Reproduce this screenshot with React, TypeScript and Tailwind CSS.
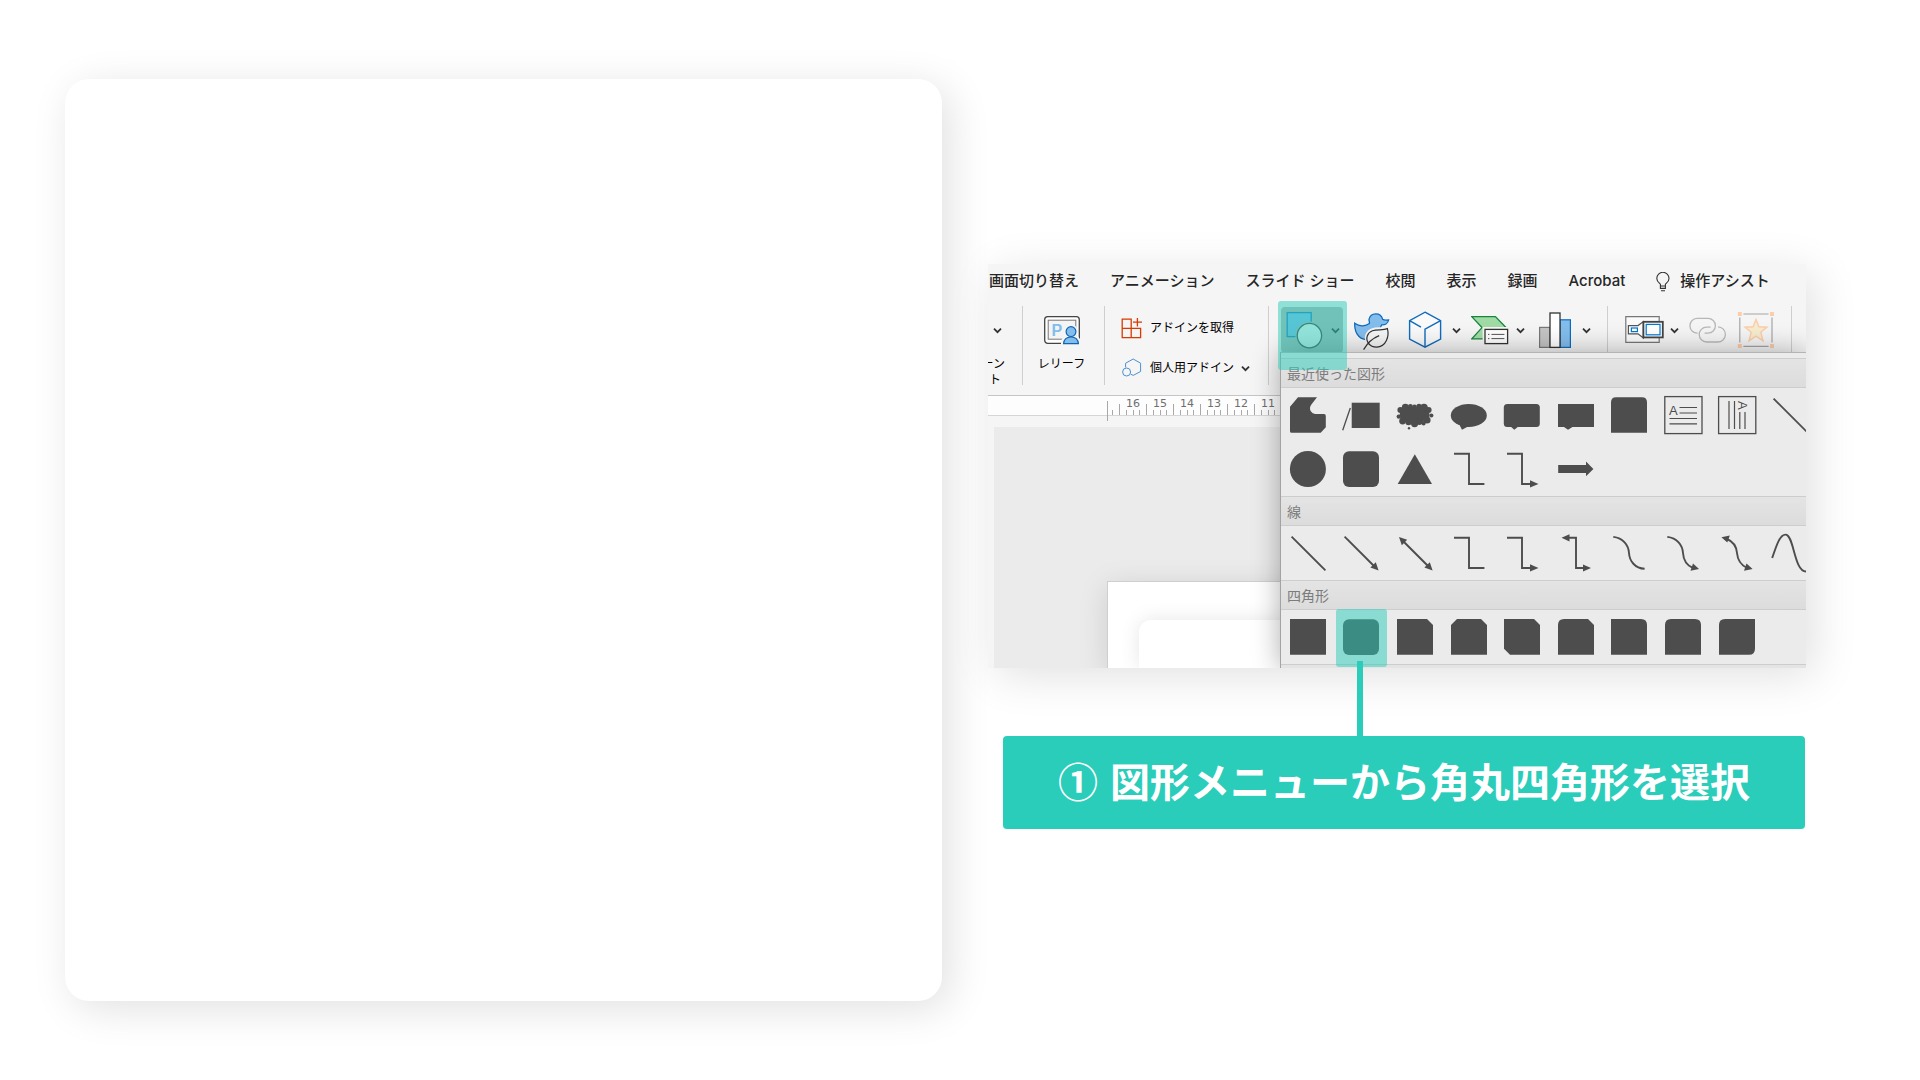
import type { ReactNode } from "react";
import clsx from "clsx";

const menuItems = [
  "画面切り替え",
  "アニメーション",
  "スライド ショー",
  "校閲",
  "表示",
  "録画",
  "Acrobat",
];

const rulerMarks = [16, 15, 14, 13, 12, 11, 10, 9];

type Shape = { name: string; art: ReactNode };

const line = { fill: "none", stroke: "#4d4d4d", strokeWidth: 1.9 };

// [cx, cy, r] of the puffs round the cloud's body
const cloudPuffs = [
  [5.4, 15, 3],
  [10.4, 12.4, 3.6],
  [15.4, 11.4, 2.4],
  [19.5, 12, 2.4],
  [24, 11.4, 2.6],
  [29, 12.6, 3.8],
  [33.6, 15, 3],
  [36.4, 20.4, 2],
  [32, 25, 3.6],
  [28.6, 28.4, 2],
  [24.4, 27, 3],
  [19.6, 28.6, 3.6],
  [13.6, 27, 3.2],
  [7.6, 26, 3.4],
  [3.8, 21.6, 2.2],
];

const diagonal = <path d="M3.6 3.6 37.4 37.4" {...line} />;
const elbow = <path d="M5 4.8H20V35H35.4" {...line} />;
const elbowArrow = (
  <>
    <path d="M5 4.8H20V35H30" {...line} />
    <path d="M28 31.2 36.5 35 28 38.6Z" />
  </>
);
const roundRect = <rect x="2" y="2.3" width="36" height="35.6" rx="6" />;
const roundTop = <path d="M2 37.8V7.5Q2 2.2 7 2.2H33Q38 2.2 38 7.5V37.8Z" />;

const recentShapes: Shape[] = [
  {
    name: "フリーフォーム",
    art: (
      <path d="M10 2.3H29L23.4 9.4Q20.8 13 23 16.6Q24.4 19 27.4 19H36Q37.8 19 37.8 21V32.3L32.7 37.8H3.5Q2 37.8 2 36.3V11.7Z" />
    ),
  },
  {
    name: "線吹き出し",
    art: (
      <>
        <path d="M9.3 13 1.7 35.3" {...line} strokeWidth={1.3} />
        <path d="M10.7 7.7H38.7V33H10.7Z" />
      </>
    ),
  },
  {
    name: "雲形吹き出し",
    art: (
      <>
        <ellipse cx="19.6" cy="20" rx="15" ry="8.6" />
        {cloudPuffs.map(([cx, cy, r]) => (
          <circle key={`${cx}-${cy}`} cx={cx} cy={cy} r={r} />
        ))}
        <circle cx="14" cy="33.2" r="1.2" />
      </>
    ),
  },
  {
    name: "円形吹き出し",
    art: (
      <>
        <ellipse cx="19.8" cy="20.4" rx="18" ry="11.5" />
        <path d="M11 28V31L13 34.8 20 31V28Z" />
      </>
    ),
  },
  {
    name: "角丸吹き出し",
    art: (
      <>
        <rect x="1.8" y="9" width="36" height="23" rx="3.5" />
        <path d="M8 31 12.3 34.8 17 31Z" />
      </>
    ),
  },
  { name: "四角形吹き出し", art: <path d="M2 9H38V32H16.5L12 34.8 8 32H2Z" /> },
  { name: "角丸 (上)", art: roundTop },
  {
    name: "テキスト ボックス",
    art: (
      <>
        <rect x="1.8" y="1.6" width="37.2" height="37" {...line} strokeWidth={1.3} />
        <path d="M16.5 12.5H34M16.5 18H34M6.5 23.5H34M6.5 28.8H34" {...line} strokeWidth={1.2} />
        <text x="6" y="19.5" fontSize="13" fontFamily="Liberation Sans, sans-serif">
          A
        </text>
      </>
    ),
  },
  {
    name: "縦書きテキスト ボックス",
    art: (
      <>
        <rect x="1.6" y="1.6" width="37.2" height="37" {...line} strokeWidth={1.3} />
        <path d="M12 6V34M17.5 6V34M22.8 17V34M28 17V34" {...line} strokeWidth={1.2} />
        <text
          x="0"
          y="0"
          fontSize="13"
          fontFamily="Liberation Sans, sans-serif"
          transform="translate(21 6) rotate(90)"
        >
          A
        </text>
      </>
    ),
  },
  { name: "直線", art: diagonal },
  { name: "楕円", art: <circle cx="19.9" cy="20" r="18" /> },
  { name: "角丸四角形", art: roundRect },
  { name: "三角形", art: <path d="M19.8 5.2 37 35H2.7Z" /> },
  { name: "カギ線コネクタ", art: elbow },
  { name: "カギ線矢印コネクタ", art: elbowArrow },
  { name: "右矢印", art: <path d="M2.2 16H30V12.6L37.4 20 30 27.2V24H2.2Z" /> },
];

const lineShapes: Shape[] = [
  { name: "直線", art: diagonal },
  {
    name: "直線矢印",
    art: (
      <>
        <path d="M3.6 3.6 33 33" {...line} />
        <path d="M37.6 37.4 29.4 34.6 34.8 29.2Z" />
      </>
    ),
  },
  {
    name: "両方向矢印",
    art: (
      <>
        <path d="M8 8 33 33" {...line} />
        <path d="M37.6 37.4 29.4 34.6 34.8 29.2ZM4 4 12.2 6.8 6.8 12.2Z" />
      </>
    ),
  },
  { name: "カギ線コネクタ", art: elbow },
  { name: "カギ線矢印コネクタ", art: elbowArrow },
  {
    name: "カギ線両方向矢印",
    art: (
      <>
        <path d="M12 4.8H20V35H28" {...line} />
        <path d="M13.5 1.2 5.5 4.8 13.5 8.4ZM27 31.4 35 35 27 38.6Z" />
      </>
    ),
  },
  { name: "曲線コネクタ", art: <path d="M4.3 3.9C14 5 19.5 12 20 20S26 35.4 35.6 35.8" {...line} /> },
  {
    name: "曲線矢印コネクタ",
    art: (
      <>
        <path d="M4.3 3.9C14 5 19.5 12 20 20S24 32.5 30 35" {...line} />
        <path d="M30 30.6 36 36 27.5 37.8Z" />
      </>
    ),
  },
  {
    name: "曲線両方向矢印",
    art: (
      <>
        <path d="M10 6C16 8.5 19.5 14 20 20S24 32 30 35" {...line} />
        <path d="M29.5 30.6 35.6 36 27 37.8ZM4.4 4.2 12.8 2.6 10.3 9.6Z" />
      </>
    ),
  },
  { name: "曲線", art: <path d="M2.2 25C6 14 9.5 1.6 15.5 1.6C24 1.6 24 38.5 36 38.5" {...line} /> },
];

const rectShapes: Shape[] = [
  { name: "正方形", art: <path d="M2 2H38V37.8H2Z" /> },
  { name: "角丸四角形", art: roundRect },
  { name: "1 つの角を切り取った四角形", art: <path d="M2 2H32L38 8V37.8H2Z" /> },
  { name: "上の角を切り取った四角形", art: <path d="M8 2H32L38 8V37.8H2V8Z" /> },
  { name: "対角を切り取った四角形", art: <path d="M2 2H32L38 8V37.8H8L2 31.8Z" /> },
  { name: "角を切り取り丸めた四角形", art: <path d="M2 8Q2 2 8 2H32L38 8V37.8H2Z" /> },
  { name: "1 つの角を丸めた四角形", art: <path d="M2 2H32Q38 2 38 8V37.8H2Z" /> },
  { name: "上の角を丸めた四角形", art: <path d="M2 8Q2 2 8 2H32Q38 2 38 8V37.8H2Z" /> },
  { name: "対角を丸めた四角形", art: <path d="M2 8Q2 2 8 2H38V31.8Q38 37.8 32 37.8H2Z" /> },
];

function Chevron() {
  return (
    <svg className="h-[9px] w-[9px] shrink-0" viewBox="0 0 9 9" fill="none" aria-hidden>
      <path d="M1 2.6 4.5 6.2 8 2.6" stroke="#333" strokeWidth="1.8" />
    </svg>
  );
}

function Divider() {
  return <div className="mt-[6px] h-[79px] w-px shrink-0 bg-[#cfcfcf]" />;
}

function Icon({ wide, children }: { wide?: boolean; children: ReactNode }) {
  return (
    <svg
      className={clsx("h-10 shrink-0", wide ? "w-10" : "w-[38px]")}
      viewBox={wide ? "0 0 40 40" : "0 0 38 40"}
      fill="none"
      aria-hidden
    >
      {children}
    </svg>
  );
}

function ShapeSection({
  title,
  shapes,
  picked,
}: {
  title: string;
  shapes: Shape[];
  picked?: number;
}) {
  return (
    <section>
      <h2 className="flex h-[30px] items-center border-y border-[#cdcdcd] bg-linear-to-b from-[#e4e4e4] to-[#dcdcdc] px-[6px] pt-px text-sm text-[#7c7c7c]">
        {title}
      </h2>
      <div className="grid w-[536px] grid-cols-10">
        {shapes.map((s, i) => (
          <button
            key={i}
            type="button"
            aria-label={s.name}
            className="relative flex h-[54px] items-center justify-center"
          >
            <svg className="h-10 w-10" viewBox="0 0 40 40" fill="#4d4d4d" aria-hidden>
              {s.art}
            </svg>
            {picked === i && (
              <span className="absolute -top-px left-px h-[58px] w-[51px] rounded-[3px] bg-[#2accba]/50" />
            )}
          </button>
        ))}
      </div>
    </section>
  );
}

function MenuBar() {
  return (
    <nav className="flex h-[35px] items-center gap-[31px] pl-px text-[15px] font-medium whitespace-nowrap text-[#262626]">
      {menuItems.map((m) => (
        <a key={m} href="#">
          {m}
        </a>
      ))}
      <a href="#" className="flex items-center gap-[10px]">
        <svg className="h-5 w-[14px]" viewBox="0 0 14 20" fill="none" stroke="#333" aria-hidden>
          <path
            d="M4.4 14V12.2C3 10.6.8 9.4.8 6.4A6.1 6.1 0 0 1 13 6.4C13 9.4 10.8 10.6 9.4 12.2V14ZM4.4 14V16.4H9.4V14M5 18.8H9"
            strokeWidth="1.1"
          />
        </svg>
        操作アシスト
      </a>
    </nav>
  );
}

function Ribbon() {
  return (
    <div className="mt-px flex h-24 border-b border-[#c6c6c6] text-xs whitespace-nowrap text-black">
      <div className="flex w-[34px] shrink-0 flex-col items-start">
        <button type="button" aria-label="その他" className="flex h-14 items-center pt-1 pl-[5px]">
          <Chevron />
        </button>
        <div className="flex w-[17px] flex-col items-end leading-4">
          <span>ーン</span>
          <span className="pr-1">ト</span>
        </div>
      </div>
      <Divider />

      <button type="button" className="flex w-[81px] shrink-0 flex-col items-center pt-[10px] pr-1">
        <Icon>
          <rect x="1.7" y="6.7" width="34.6" height="26.6" rx="3" fill="#fff" stroke="#444" strokeWidth="1.3" />
          <rect x="5.2" y="10.2" width="27.6" height="19" fill="#f4f4f4" stroke="#777" />
          <text x="8.6" y="26" fontSize="16" fontWeight="700" fill="#83bdec" fontFamily="Liberation Sans, sans-serif">
            P
          </text>
          <path d="M18 35V32Q19 25 28 25T38 32V35Z" fill="#f5f5f5" />
          <circle cx="28" cy="21.5" r="7" fill="#f5f5f5" />
          <circle cx="28" cy="21.6" r="4.9" fill="#83bdec" stroke="#0f64b4" strokeWidth="1.2" />
          <path d="M20.6 33.6Q21.2 27 28 27T35.4 33.6Z" fill="#83bdec" stroke="#0f64b4" strokeWidth="1.2" />
        </Icon>
        <span className="mt-[6px] leading-4">レリーフ</span>
      </button>
      <Divider />

      <div className="flex w-[163px] shrink-0 flex-col pt-2 pl-4">
        <button type="button" className="flex h-10 items-center gap-[7px]">
          <svg className="h-[22px] w-[22px]" viewBox="0 0 22 22" fill="none" stroke="#d83b01" strokeWidth="1.3" aria-hidden>
            <path d="M1.2 2.2H10.2V20.6H1.2ZM1.2 11.4H19.6V20.6H1.2M16.4 1V9.6M12 5.2H21" />
          </svg>
          アドインを取得
        </button>
        <button type="button" className="flex h-10 items-center gap-[7px]">
          <svg className="h-[22px] w-[22px]" viewBox="0 0 22 22" fill="none" stroke="#4a90d0" aria-hidden>
            <path d="M4.6 10.5V6.2L12.2 2 19.6 6.2V14.5L12.2 18.4 9.8 17.2" />
            <circle cx="5.6" cy="15" r="4" />
          </svg>
          個人用アドイン
          <Chevron />
        </button>
      </div>
      <Divider />

      <div className="flex h-[60px] shrink-0 items-center gap-[10px] pl-3">
        <button
          type="button"
          aria-label="図形"
          className="flex h-[46px] w-[62px] items-center gap-[6px] rounded-[4px] bg-[#b8b8b8] pl-1"
        >
          <Icon wide>
            <rect x="2.2" y="2.6" width="24" height="24" fill="#83beef" stroke="#1e78c8" strokeWidth="1.3" />
            <circle cx="24.4" cy="25.6" r="14" fill="#b8b8b8" />
            <circle cx="24.4" cy="25.6" r="12.2" fill="#fafafa" stroke="#444" strokeWidth="1.3" />
          </Icon>
          <Chevron />
        </button>
        <button type="button" aria-label="アイコン" className="w-11">
          <Icon>
            <path
              d="M1.7 13.2C6 16.2 12 17 16.4 13.6C16.8 12.8 16 11 16 9.4A7 7 0 0 1 29.6 9.2C30.6 10.2 33.4 10.2 35.6 10C35 13.6 31.6 15 28.6 14.8C27.4 16.4 27.6 18 27.6 20C27.4 26 20 30 13.6 29.6C4.6 29 1.4 21 1.7 13.2Z"
              fill="#83bdec"
              stroke="#0f6cbd"
              strokeWidth="1.3"
            />
            <path
              d="M10.6 39.6C12.6 36 14 33.4 15.6 31.6C13 28 14.6 22.6 19.4 20.8C24.4 19 30 20.6 34.4 18.6C36.4 26 33.4 36.6 23.6 37.2C20 37.2 17 36.4 14.8 34.6"
              fill="#f6f6f6"
              stroke="#f6f6f6"
              strokeWidth="5"
            />
            <path
              d="M10.6 39.6C14.6 32.6 19 28.4 26.2 25.6M15.6 33.4C12 28.6 14.4 22.6 19.4 20.8C24.4 19 30 20.6 34.4 18.6C36.4 26 33.4 36.6 23.6 37.2C20.4 37.2 17.6 36.4 15.6 33.4Z"
              stroke="#333"
              strokeWidth="1.2"
            />
          </Icon>
        </button>
        <button type="button" aria-label="3D モデル" className="flex items-center gap-[7px]">
          <Icon>
            <path
              d="M18 2.2 33.6 10.6V29L18 37.2 2.6 29V10.6Z"
              fill="#fafafa"
              stroke="#0f6cbd"
              strokeWidth="1.4"
            />
            <path d="M2.6 10.6 14 17.2M18 37.2V19.2L33.6 10.6" stroke="#0f6cbd" strokeWidth="1.4" />
          </Icon>
          <Chevron />
        </button>
        <button type="button" aria-label="SmartArt" className="flex items-center gap-[7px]">
          <Icon>
            <path d="M.8 6.6H24.4L35 17.6 24 28.8H.8L11 17.6Z" fill="#a0dba6" stroke="#17853f" strokeWidth="1.3" />
            <rect x="11.6" y="17" width="28" height="20" fill="#f6f6f6" />
            <rect x="14" y="19.4" width="22.6" height="14.2" fill="#fff" stroke="#333" strokeWidth="1.3" />
            <path d="M20.4 24.4H33.4M20.4 28.6H33.4M17 24.4H18.4M17 28.6H18.4" stroke="#555" />
          </Icon>
          <Chevron />
        </button>
        <button type="button" aria-label="グラフ" className="flex items-center gap-[7px]">
          <Icon wide>
            <rect x="4.6" y="17.4" width="10.4" height="20" fill="#c4c4c4" stroke="#777" strokeWidth="1.2" />
            <rect x="25" y="9.8" width="10.4" height="27.6" fill="#83bdec" stroke="#0f6cbd" strokeWidth="1.2" />
            <rect x="15" y="3" width="10" height="34.4" fill="#fff" stroke="#333" strokeWidth="1.3" />
          </Icon>
          <Chevron />
        </button>
      </div>
      <div className="ml-4 flex">
        <Divider />
      </div>

      <div className="flex h-[60px] shrink-0 items-center gap-[10px] px-4">
        <button type="button" aria-label="テキスト" className="flex items-center gap-[6px]">
          <Icon wide>
            <path d="M1.8 6.6H35.2V32.4H1.8Z" fill="#fafafa" stroke="#777" strokeWidth="1.2" />
            <path d="M4.4 15.6H14L19.4 11.6V28L14 23.8H4.4Z" fill="#fff" stroke="#555" strokeWidth="1.2" />
            <rect x="7.4" y="18" width="6" height="3.6" stroke="#0078d4" strokeWidth="1.2" />
            <rect x="19.4" y="11.8" width="19.4" height="15.6" fill="#fff" stroke="#444" strokeWidth="1.8" />
            <rect x="22.2" y="14.4" width="13.8" height="10.4" stroke="#0078d4" strokeWidth="1.2" />
          </Icon>
          <Chevron />
        </button>
        <button type="button" aria-label="リンク" disabled>
          <Icon>
            <path
              d="M8.6 23.2A7.4 7.4 0 0 1 8 8.4H19A7.4 7.4 0 0 1 19 23.2H15.6M29 16.8A7.4 7.4 0 0 1 28.6 32H17.6A7.4 7.4 0 0 1 17.6 17.2H21.6"
              stroke="#b8b8b8"
              strokeWidth="1.3"
            />
          </Icon>
        </button>
        <button type="button" aria-label="オブジェクト" disabled>
          <Icon>
            <path d="M6.4 4H31.6M6.4 36.4H31.6M2.8 7.6V32.6M35 7.6V32.6" stroke="#a6a6a6" strokeWidth="1.2" />
            <path
              d="M19 9.4 21.9 16.8 30 17.2 23.8 22.2 26 30.8 19 26.2 12 30.8 14.2 22.2 8 17.2 16.1 16.8Z"
              fill="#f7ecce"
              stroke="#fbcdaa"
              strokeWidth="1.4"
            />
            <path d="M.8 2H4.8V6H.8ZM33 2H37V6H33ZM.8 34H4.8V38H.8ZM33 34H37V38H33Z" fill="#fbcdaa" />
          </Icon>
        </button>
      </div>
      <Divider />
    </div>
  );
}

function Ruler() {
  return (
    <div className="flex h-5 border-b border-[#d6d6d6] bg-[#fdfdfd] pl-[119px]">
      <svg className="h-[25px] w-3 shrink-0" viewBox="0 0 12 25" stroke="#a8a8a8" aria-hidden>
        <path d="M.5 5V25M5.5 14V19" />
      </svg>
      {rulerMarks.map((n) => (
        <svg key={n} className="h-5 w-[27px] shrink-0" viewBox="0 0 27 20" aria-hidden>
          <path d="M.5 8V19M7.5 14V19M14.5 14V19M20.5 14V19" stroke="#a8a8a8" />
          <text x="14" y="11" textAnchor="middle" fontSize="11" fill="#6f6f6f" fontFamily="DejaVu Sans, sans-serif">
            {n}
          </text>
        </svg>
      ))}
    </div>
  );
}

function Workspace() {
  return (
    <div className="mt-[11px] ml-[6px] overflow-hidden bg-[#ebebeb] pt-[154px] pl-[113px]">
      <div className="overflow-hidden border-t border-l border-[#cfcfcf] bg-white pt-[38px] pl-[31px] shadow-[0_6px_28px_rgba(0,0,0,0.13)]">
        <div className="h-12 rounded-tl-xl bg-white shadow-[0_0_20px_rgba(0,0,0,0.1)]" />
      </div>
    </div>
  );
}

function ShapePopup() {
  return (
    <div className="absolute top-[88px] right-0 bottom-0 left-[292px] border-l border-[#a3a3a3] shadow-[0_0_26px_rgba(0,0,0,0.32)]">
      <div className="h-full overflow-hidden border-t border-[#b4b4b4] bg-[#ebebeb] pt-[5px]">
        <ShapeSection title="最近使った図形" shapes={recentShapes} />
        <ShapeSection title="線" shapes={lineShapes} />
        <ShapeSection title="四角形" shapes={rectShapes} picked={1} />
        <div className="h-[30px] border-t border-[#cdcdcd] bg-[#e4e4e4]" />
      </div>
    </div>
  );
}

export default function App() {
  return (
    <main className="grid min-h-screen grid-cols-[877fr_818fr] gap-[46px] overflow-hidden bg-white py-[79px] pr-[114px] pl-[65px] font-['Inter','Noto_Sans_CJK_JP',sans-serif]">
      <div className="rounded-3xl bg-white shadow-[8px_8px_42px_rgba(0,0,0,0.12)]" />

      <div className="min-w-0 pt-[185px]">
        <div className="shadow-[8px_8px_42px_rgba(0,0,0,0.12)]">
          <div className="relative overflow-hidden bg-[#f5f5f5]">
            <MenuBar />
            <Ribbon />
            <Ruler />
            <Workspace />
            <ShapePopup />
            <span className="absolute top-[37px] left-[290px] h-[69px] w-[69px] rounded-[3px] bg-[#2accba]/50" />
          </div>
        </div>

        <div className="relative -mt-[7px] ml-[369px] h-[75px] w-[6px] bg-[#2accba]" />
        <p className="mr-px ml-[15px] flex h-[93px] items-center justify-center gap-3 rounded-[4px] bg-[#2accba] pb-[6px] font-['Noto_Sans_CJK_JP',sans-serif] text-[40px] font-bold text-white">
          <span>①</span>
          <span>図形メニューから角丸四角形を選択</span>
        </p>
      </div>
    </main>
  );
}
